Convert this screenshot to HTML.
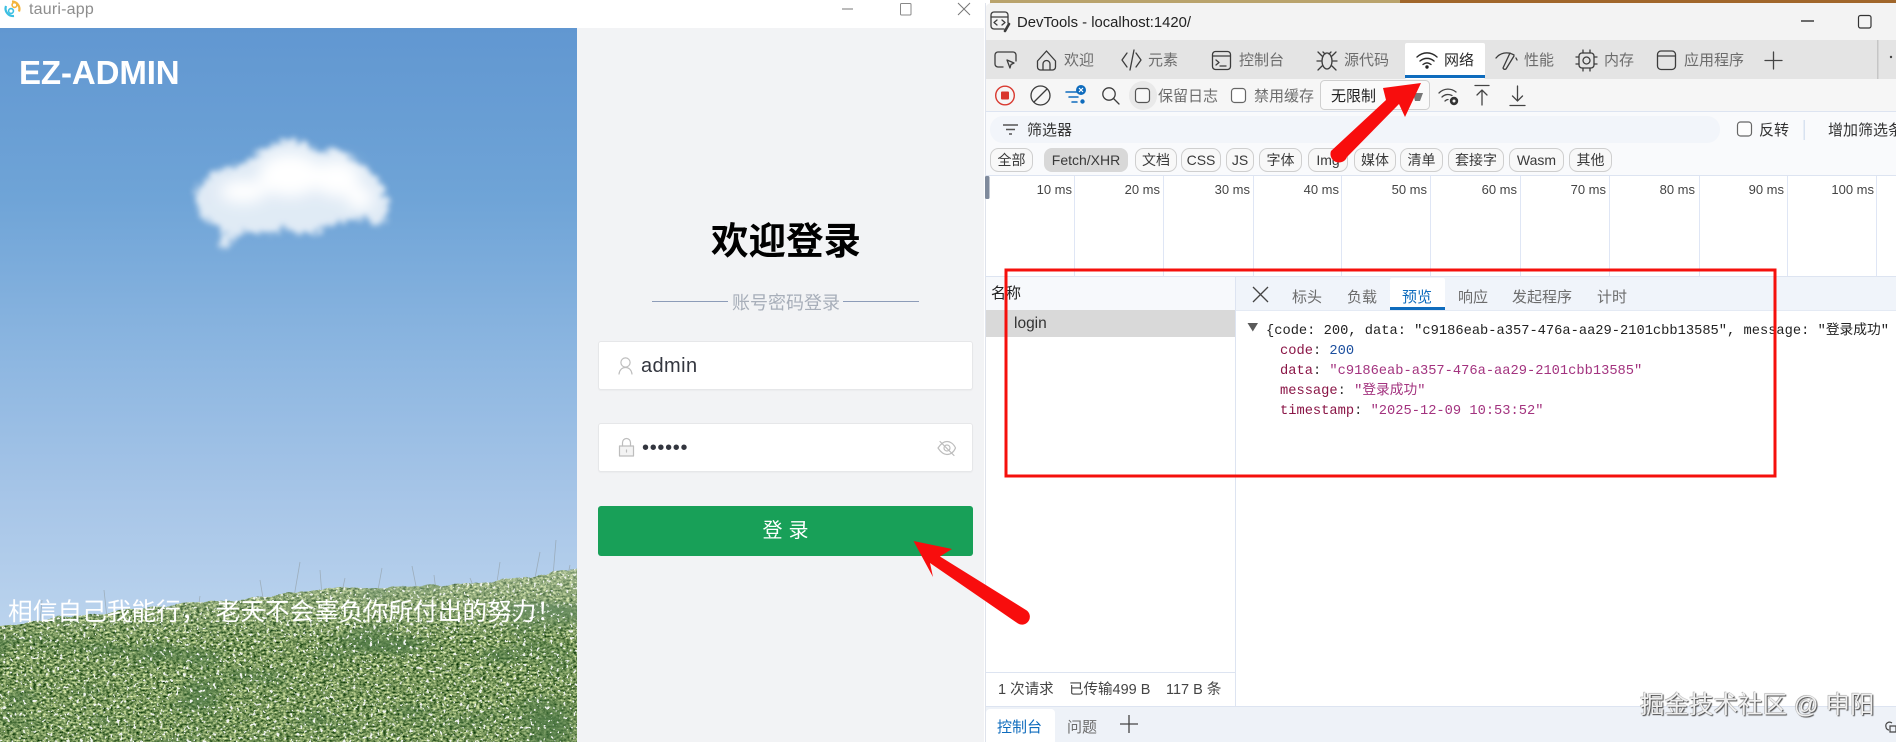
<!DOCTYPE html>
<html lang="zh">
<head>
<meta charset="utf-8">
<title>tauri-app DevTools</title>
<style>
html,body{margin:0;padding:0;width:1896px;height:742px;overflow:hidden;background:#fff}
body{position:relative;font-family:"Liberation Sans","Noto Sans CJK SC",sans-serif}
.a{position:absolute;white-space:nowrap}
.input{position:absolute;left:598px;width:373px;background:#fff;border:1px solid #e6e7e9;border-radius:3px;box-shadow:0 1px 1px rgba(0,0,0,.03)}
svg{position:absolute;left:0;top:0}
svg text{font-family:"Liberation Sans","Noto Sans CJK SC",sans-serif;font-size:15px;fill:#6c6c6c}
.ic{fill:none;stroke:#3c3c3c;stroke-width:1.3;stroke-linecap:round;stroke-linejoin:round}
.chip{fill:#f8f8f8;stroke:#cfcfcf;stroke-width:1}
.chips text{font-size:14px;fill:#3a3a3a;text-anchor:middle}
.ms text{font-size:13px;fill:#444;text-anchor:end}
.mono text{font-family:"Liberation Mono","Noto Sans CJK SC",monospace;font-size:13.73px}
</style>
</head>
<body>

<!-- Left app window -->
<div class="a" style="left:0;top:0;width:985px;height:28px;background:#fff"></div>
<div class="a" style="left:29px;top:0;font-size:16px;line-height:20px;color:#8d8d8d;letter-spacing:.2px">tauri-app</div>

<svg width="577" height="742" viewBox="0 0 577 742" style="left:0;top:0">
  <defs>
    <linearGradient id="sky" x1="0" y1="28" x2="0" y2="640" gradientUnits="userSpaceOnUse">
      <stop offset="0" stop-color="#6197d1"/>
      <stop offset=".28" stop-color="#6fa4d7"/>
      <stop offset=".55" stop-color="#8eb7e1"/>
      <stop offset=".78" stop-color="#a8c6e8"/>
      <stop offset="1" stop-color="#bdd5ee"/>
    </linearGradient>
    <linearGradient id="haze" x1="0" y1="570" x2="0" y2="640" gradientUnits="userSpaceOnUse">
      <stop offset="0" stop-color="#dfe6d8" stop-opacity=".38"/>
      <stop offset="1" stop-color="#dfe6d8" stop-opacity="0"/>
    </linearGradient>
    <filter id="clO" filterUnits="userSpaceOnUse" x="-60" y="-20" width="800" height="500" color-interpolation-filters="sRGB">
      <feTurbulence type="fractalNoise" baseFrequency=".06" numOctaves="5" seed="11" result="t"/>
      <feDisplacementMap in="SourceGraphic" in2="t" scale="55" xChannelSelector="R" yChannelSelector="G"/>
      <feGaussianBlur stdDeviation="9"/>
    </filter>
    <filter id="clI" filterUnits="userSpaceOnUse" x="-60" y="-20" width="800" height="500">
      <feGaussianBlur stdDeviation="22"/>
    </filter>
    <filter id="grass" filterUnits="userSpaceOnUse" x="0" y="540" width="577" height="202" color-interpolation-filters="sRGB">
      <feTurbulence type="fractalNoise" baseFrequency=".04" numOctaves="3" seed="3" result="e"/>
      <feDisplacementMap in="SourceGraphic" in2="e" scale="8" xChannelSelector="R" yChannelSelector="G" result="shape"/>
      <feTurbulence type="fractalNoise" baseFrequency=".3 .5" numOctaves="3" seed="4" result="n"/>
      <feColorMatrix in="n" type="matrix" values="1.4 0 0 0 -.24  1.2 0 0 0 -.02  1.1 0 0 0 -.2  0 0 0 0 1" result="base"/>
      <feTurbulence type="fractalNoise" baseFrequency=".012 .03" numOctaves="2" seed="12" result="lo"/>
      <feColorMatrix in="lo" type="matrix" values="0 0 0 0 .3  0 0 0 0 .47  0 0 0 0 .27  3 0 0 0 -1.6" result="dark"/>
      <feTurbulence type="fractalNoise" baseFrequency=".3" numOctaves="2" seed="21" result="s"/>
      <feColorMatrix in="s" type="matrix" values="0 0 0 0 .95  0 0 0 0 .96  0 0 0 0 .95  16 0 0 0 -10.2" result="white"/>
      <feMerge result="m"><feMergeNode in="base"/><feMergeNode in="dark"/><feMergeNode in="white"/></feMerge>
      <feComposite in="m" in2="shape" operator="in"/>
    </filter>
    <filter id="hz" filterUnits="userSpaceOnUse" x="0" y="540" width="577" height="202">
      <feTurbulence type="fractalNoise" baseFrequency=".04" numOctaves="3" seed="3" result="e"/>
      <feDisplacementMap in="SourceGraphic" in2="e" scale="8" xChannelSelector="R" yChannelSelector="G"/>
    </filter>
  </defs>
  <rect x="0" y="28" width="577" height="714" fill="url(#sky)"/>
  <!-- cloud -->
  <g transform="translate(180 120) scale(.3333)">
    <path filter="url(#clO)" fill="#e6eef7" fill-opacity=".95" d="M45 235 C55 180 85 150 200 130 C225 95 290 60 350 62 C395 65 405 95 420 100 C450 80 495 80 525 130 C570 150 610 165 625 260 C620 300 600 330 585 315 C570 295 550 290 500 300 C450 315 400 345 365 345 C335 335 330 320 310 325 C280 345 240 350 200 335 C170 340 150 370 120 385 C125 350 135 330 115 315 C80 310 50 285 45 235Z"/>
    <g filter="url(#clI)" fill="#fff">
      <ellipse cx="330" cy="165" rx="95" ry="65"/>
      <ellipse cx="470" cy="175" rx="70" ry="55"/>
      <ellipse cx="190" cy="215" rx="70" ry="35"/>
      <ellipse cx="540" cy="235" rx="40" ry="35"/>
    </g>
  </g>
  <!-- stems -->
  <g stroke="#8a9395" stroke-width=".8" fill="none" opacity=".55">
    <path d="M42 600l-2 22M104 590l3 28M200 596l-2 14M300 562l-6 35M320 570l2 26M382 568l-4 22M412 566l4 20M434 575l2 16M500 562l-3 20M540 552l-5 26M556 540l-3 36M570 565l-2 10M260 580l3 18M345 578l-3 14M470 578l4 10"/>
  </g>
  <path filter="url(#grass)" fill="#000" d="M0 626 C70 618 130 610 200 603 C260 597 300 592 340 589 C420 584 500 585 577 568 L590 568 L590 760 L-10 760 L-10 626Z"/>
  <path filter="url(#hz)" fill="url(#haze)" d="M0 626 C70 618 130 610 200 603 C260 597 300 592 340 589 C420 584 500 585 577 568 L590 568 L590 660 L-10 660 L-10 626Z"/>
  <rect x="577" y="28" width="20" height="714" fill="#f2f3f5"/>
</svg>

<svg width="40" height="28" viewBox="0 0 40 28" style="left:0;top:0">
  <path d="M12 1.500a7.500 7.500 0 0 1 7 10" fill="none" stroke="#f3b53c" stroke-width="2.200"/>
  <circle cx="14.500" cy="5" r="2.400" fill="none" stroke="#f3b53c" stroke-width="1.600"/>
  <path d="M14 16a7.500 7.500 0 0 1-8-10" fill="none" stroke="#3bbfe2" stroke-width="2.200"/>
  <circle cx="11" cy="11" r="2.400" fill="none" stroke="#3bbfe2" stroke-width="1.600"/>
</svg>

<div class="a" style="left:19px;top:53px;font-size:33px;line-height:39px;font-weight:700;color:#fff;letter-spacing:-.1px">EZ-ADMIN</div>
<div class="a" style="left:8px;top:595px;font-size:24.700px;line-height:36px;color:#fff">相信自己我能行，<span style="margin-left:10px">老天不会辜负你所付出的努力！</span></div>

<!-- Login panel -->
<div class="a" style="left:577px;top:28px;width:407px;height:714px;background:#f2f3f5"></div>
<div class="a" style="left:577px;top:216px;width:418px;text-align:center;font-size:37.500px;line-height:50px;font-weight:700;color:#000">欢迎登录</div>
<div class="a" style="left:652px;top:301px;width:76px;height:1px;background:#8d9cb8"></div>
<div class="a" style="left:843px;top:301px;width:76px;height:1px;background:#8d9cb8"></div>
<div class="a" style="left:732px;top:290px;font-size:18px;line-height:26px;color:#a7aeb9">账号密码登录</div>
<div class="input" style="top:341px;height:47px"></div>
<div class="input" style="top:423px;height:47px"></div>
<div class="a" style="left:641px;top:352px;font-size:20px;line-height:28px;color:#33363f;letter-spacing:.4px">admin</div>
<div class="a" style="left:642px;top:434px;font-size:20px;line-height:28px;color:#33363f;letter-spacing:.7px">••••••</div>
<div class="a" style="left:598px;top:506px;width:375px;height:50px;line-height:50px;background:#18a058;border-radius:3px;color:#fff;font-size:20px;text-align:center;letter-spacing:6px;text-indent:6px">登录</div>

<svg width="400" height="145" viewBox="590 335 400 145" style="left:590px;top:335px">
  <g fill="none" stroke="#bdbdbd" stroke-width="1.200" stroke-linecap="round" stroke-linejoin="round">
    <circle cx="625.500" cy="362.500" r="4.600"/>
    <path d="M619 374c.5-4 3-6.500 6.500-6.500s6 2.500 6.500 6.500"/>
    <rect x="619.500" y="446" width="14" height="10" fill="#f3f3f3"/>
    <path d="M622.500 446v-3.500a4 4 0 0 1 8 0v3.500M626.500 450v2"/>
    <path d="M938 448c3-4.500 6-6.500 9-6.500s6.500 2 8.500 6.500c-2 4.500-5 6.500-8.500 6.500s-6-2-9-6.500z"/>
    <circle cx="947" cy="448" r="3"/>
    <path d="M940 441.500l14 14"/>
  </g>
</svg>

<!-- DevTools window -->
<svg width="911" height="742" viewBox="985 0 911 742" style="left:985px;top:0">
  <!-- wallpaper strip -->
  <rect x="990" y="0" width="906" height="5" fill="#b9a36c"/>
  <rect x="1400" y="0" width="496" height="4" fill="#a0662a"/>
  <!-- frame -->
  <rect x="985" y="3" width="911" height="739" rx="7" fill="#fff"/>
  <path d="M985 40V10a7 7 0 0 1 7-7H1896V40Z" fill="#f3f3f3"/>
  <rect x="985" y="40" width="911" height="39" fill="#e4e4e4"/>
  <rect x="985" y="79" width="911" height="32" fill="#f6f6f6"/>
  <rect x="985" y="111" width="911" height="65" fill="#f9fafc"/>
  <rect x="985" y="111" width="911" height="1" fill="#dde4f1"/>
  <rect x="990" y="116" width="730" height="27" rx="13" fill="#f2f5fa"/>
  <rect x="985" y="175" width="911" height="1" fill="#dde4f1"/>
  <rect x="985" y="3" width="1" height="739" fill="#dfe3ec"/>

  <!-- Title -->
  <g class="ic" stroke-width="1.200">
    <path d="M1004 29h-10a3 3 0 0 1-3-3V15a3 3 0 0 1 3-3h11a3 3 0 0 1 3 3v8"/>
    <path d="M991 17h17M997 20l-3 2.500 3 2.500M1002 20l3 2.500-3 2.500"/>
    <path d="M1009 24l-4 7" stroke-width="2.600"/>
  </g>
  <text x="1017" y="27" textLength="174" lengthAdjust="spacingAndGlyphs" style="fill:#222;font-size:15px">DevTools - localhost:1420/</text>
  <path d="M1801 21h13" stroke="#222" stroke-width="1.300"/>
  <rect x="1858.500" y="15.500" width="12.500" height="12.500" rx="2" fill="none" stroke="#333" stroke-width="1.200"/>

  <!-- Tabs -->
  <rect x="1405" y="43" width="80" height="36" fill="#fff" rx="2"/>
  <rect x="1405" y="75" width="80" height="3" fill="#0f6cbd"/>
  <g class="ic">
    <path d="M1003 67h-5a3 3 0 0 1-3-3v-9a3 3 0 0 1 3-3h15a3 3 0 0 1 3 3v6"/>
    <path d="M1007 60l7 3-3 1.500-1 3.500z"/>
    <path d="M1037.500 61l9-10 9 10v6a3 3 0 0 1-3 3h-12a3 3 0 0 1-3-3zM1043 70v-6a3.500 3.500 0 0 1 7 0v6"/>
    <path d="M1127 53l-5 7 5 7M1136 53l5 7-5 7M1134 50l-4 20"/>
    <rect x="1212.500" y="51.500" width="18" height="18" rx="3"/>
    <path d="M1213 56h17M1216 60l3 2.500-3 2.500M1220 66h6"/>
    <ellipse cx="1327" cy="61" rx="5" ry="8"/>
    <path d="M1322 56l-4-4M1332 56l4-4M1321 61h-4M1333 61h4M1322 66l-4 4M1332 66l4 4M1323 52l2 2M1331 52l-2 2"/>
    <path d="M1496 58c4-5 11-7 18-3M1517 60l-1-2M1510 53l-7 15a2 2 0 0 0 3 1l8-13"/>
    <rect x="1579" y="53" width="15" height="15" rx="3"/>
    <circle cx="1586.500" cy="60.500" r="3.500"/>
    <path d="M1583 50v3M1590 50v3M1583 68v3M1590 68v3M1576 57h3M1576 64h3M1594 57h3M1594 64h3"/>
    <rect x="1657.500" y="51" width="18" height="18.500" rx="3.500"/>
    <path d="M1658 56h17"/>
    <path d="M1765 60.500h17M1773.500 52v17" stroke="#444"/>
  </g>
  <g stroke="#2a2a2a" stroke-width="1.400" fill="none" stroke-linecap="round">
    <path d="M1417 57c6-5.500 14-5.500 20 0M1420 61c4-3.500 10-3.500 14 0M1423 64.500c2.500-2 5.500-2 8 0"/>
  </g>
  <circle cx="1427" cy="67" r="1.700" fill="#222"/>
  <text x="1064" y="65">欢迎</text>
  <text x="1148" y="65">元素</text>
  <text x="1239" y="65">控制台</text>
  <text x="1344" y="65">源代码</text>
  <text x="1444" y="65" style="fill:#2b2b2b">网络</text>
  <text x="1524" y="65">性能</text>
  <text x="1604" y="65">内存</text>
  <text x="1684" y="65">应用程序</text>
  <rect x="1877" y="40" width="1.500" height="39" fill="#c6c6c6"/>
  <circle cx="1891" cy="57" r="1.200" fill="#444"/>

  <!-- Toolbar -->
  <circle cx="1005" cy="95.500" r="9.300" fill="none" stroke="#d93a30" stroke-width="1.400"/>
  <rect x="1001" y="91.500" width="8" height="8" rx="1" fill="#d9362c"/>
  <g class="ic" stroke="#555">
    <circle cx="1040.500" cy="95.500" r="9.500"/>
    <path d="M1034 102l13-13"/>
    <circle cx="1109" cy="94" r="6.200"/>
    <path d="M1113.500 98.500l5.500 5.500"/>
  </g>
  <g stroke="#0f6cbd" stroke-width="1.500" stroke-linecap="round" fill="none">
    <path d="M1066 92h13M1069 97h9M1072 102h5"/>
  </g>
  <circle cx="1081" cy="90" r="5" fill="#0f6cbd"/>
  <path d="M1079 88l4 4M1083 88l-4 4" stroke="#fff" stroke-width="1.200"/>
  <circle cx="1082.500" cy="101.500" r="2.200" fill="#0f6cbd"/>
  <rect x="1129" y="81" width="28" height="29" rx="14" fill="#e9e9e9"/>
  <rect x="1135.500" y="88.500" width="14" height="14" rx="3" fill="#f8f8f8" stroke="#555" stroke-width="1.200"/>
  <text x="1158" y="101">保留日志</text>
  <rect x="1231.500" y="88.500" width="14" height="14" rx="3" fill="#fff" stroke="#666" stroke-width="1.200"/>
  <text x="1254" y="101">禁用缓存</text>
  <rect x="1320.500" y="80.500" width="109" height="29" rx="4" fill="#fafafa" stroke="#cfcfcf"/>
  <text x="1331" y="101" style="fill:#222">无限制</text>
  <path d="M1413 93h10l-3 8h-5z" fill="#777"/>
  <g fill="none" stroke="#444" stroke-width="1.300" stroke-linecap="round">
    <path d="M1439 93c5-5 12-5 17-1M1442 97c3-3 7-3 10-1.500M1445 101c1-1 2-1.500 3-1.500"/>
    <path d="M1475 85.500h14M1482 105V90M1477 95l5-5 5 5"/>
    <path d="M1510 105.500h15M1517.500 86v15M1512.500 96l5 5 5-5"/>
  </g>
  <circle cx="1454" cy="101" r="4.200" fill="#333"/>
  <circle cx="1454" cy="101" r="1.500" fill="#f6f6f6"/>

  <!-- Filter row -->
  <path d="M1003 125h15M1006 129.500h9M1009 134h3" stroke="#555" stroke-width="1.500" fill="none"/>
  <text x="1027" y="135" style="fill:#333">筛选器</text>
  <rect x="1737.500" y="122" width="14" height="14" rx="3" fill="#fdfdfd" stroke="#666" stroke-width="1.200"/>
  <text x="1759" y="135" style="fill:#333">反转</text>
  <rect x="1803.500" y="120" width="1.500" height="20" fill="#d8e2f0"/>
  <text x="1828" y="135" style="fill:#333">增加筛选条件</text>

  <!-- Chips -->
  <g class="chips">
    <rect class="chip" x="990.500" y="148.500" width="42" height="23" rx="8"/>
    <rect x="1044" y="148" width="84" height="24" rx="8" fill="#d8d8d8"/>
    <rect class="chip" x="1135.500" y="148.500" width="41" height="23" rx="8"/>
    <rect class="chip" x="1181.500" y="148.500" width="39" height="23" rx="8"/>
    <rect class="chip" x="1226.500" y="148.500" width="27" height="23" rx="8"/>
    <rect class="chip" x="1259.500" y="148.500" width="42" height="23" rx="8"/>
    <rect class="chip" x="1308.500" y="148.500" width="39" height="23" rx="8"/>
    <rect class="chip" x="1354.500" y="148.500" width="41" height="23" rx="8"/>
    <rect class="chip" x="1400.500" y="148.500" width="42" height="23" rx="8"/>
    <rect class="chip" x="1448.500" y="148.500" width="55" height="23" rx="8"/>
    <rect class="chip" x="1509.500" y="148.500" width="54" height="23" rx="8"/>
    <rect class="chip" x="1569.500" y="148.500" width="42" height="23" rx="8"/>
    <text x="1011.500" y="165">全部</text>
    <text x="1086" y="165">Fetch/XHR</text>
    <text x="1156" y="165">文档</text>
    <text x="1201" y="165">CSS</text>
    <text x="1240" y="165">JS</text>
    <text x="1280.500" y="165">字体</text>
    <text x="1328" y="165">Img</text>
    <text x="1375" y="165">媒体</text>
    <text x="1421.500" y="165">清单</text>
    <text x="1476" y="165">套接字</text>
    <text x="1536.500" y="165">Wasm</text>
    <text x="1590.500" y="165">其他</text>
  </g>

  <!-- Timeline -->
  <rect x="985" y="176" width="4.500" height="23" rx="1.500" fill="#7f8a9c"/>
  <g stroke="#dfe6f5" stroke-width="1">
    <path d="M1074.500 176v100M1163.500 176v100M1253.500 176v100M1341.500 176v100M1430.500 176v100M1520.500 176v100M1609.500 176v100M1699.500 176v100M1787.500 176v100M1876.500 176v100"/>
  </g>
  <g class="ms">
    <text x="1072" y="194">10 ms</text>
    <text x="1160" y="194">20 ms</text>
    <text x="1250" y="194">30 ms</text>
    <text x="1339" y="194">40 ms</text>
    <text x="1427" y="194">50 ms</text>
    <text x="1517" y="194">60 ms</text>
    <text x="1606" y="194">70 ms</text>
    <text x="1695" y="194">80 ms</text>
    <text x="1784" y="194">90 ms</text>
    <text x="1874" y="194">100 ms</text>
  </g>

  <!-- Requests panel -->
  <rect x="985" y="276" width="911" height="1" fill="#dde4f1"/>
  <rect x="986" y="277" width="249" height="33" fill="#f7f9fc"/>
  <rect x="1235" y="277" width="661" height="33" fill="#f0f4fa"/>
  <rect x="1235" y="310" width="661" height="1" fill="#e4eaf4"/>
  <rect x="986" y="310" width="249" height="27" fill="#d9d9d9"/>
  <rect x="1235" y="277" width="1" height="429" fill="#dde4f1"/>
  <text x="991" y="298" style="fill:#222">名称</text>
  <text x="1014" y="328" style="fill:#333;font-size:15.500px">login</text>
  <path d="M1253 287l15 15M1268 287l-15 15" stroke="#444" stroke-width="1.300"/>
  <rect x="1390" y="278" width="55" height="32" fill="#fff" rx="2"/>
  <rect x="1390" y="307" width="55" height="3" fill="#0f6cbd"/>
  <text x="1292" y="302">标头</text>
  <text x="1347" y="302">负载</text>
  <text x="1402" y="302" style="fill:#0f6cbd">预览</text>
  <text x="1458" y="302">响应</text>
  <text x="1512" y="302">发起程序</text>
  <text x="1597" y="302">计时</text>

  <!-- Preview -->
  <path d="M1247.500 323h10.500l-5.200 8.500z" fill="#5a5a5a"/>
  <g class="mono">
    <text x="1266" y="334" style="fill:#222">{code: 200, data: "c9186eab-a357-476a-aa29-2101cbb13585", message: "登录成功"</text>
    <text x="1280" y="354"><tspan fill="#8a1546">code</tspan><tspan fill="#333">: </tspan><tspan fill="#1c4f9e">200</tspan></text>
    <text x="1280" y="374"><tspan fill="#8a1546">data</tspan><tspan fill="#333">: </tspan><tspan fill="#a3337f">"c9186eab-a357-476a-aa29-2101cbb13585"</tspan></text>
    <text x="1280" y="394"><tspan fill="#8a1546">message</tspan><tspan fill="#333">: </tspan><tspan fill="#a3337f">"登录成功"</tspan></text>
    <text x="1280" y="414"><tspan fill="#8a1546">timestamp</tspan><tspan fill="#333">: </tspan><tspan fill="#a3337f">"2025-12-09 10:53:52"</tspan></text>
  </g>

  <!-- Status -->
  <rect x="986" y="672" width="249" height="1" fill="#dde4f1"/>
  <g>
    <text x="998" y="694" style="fill:#444;font-size:14.500px">1 次请求</text>
    <text x="1069" y="694" style="fill:#444;font-size:14.500px">已传输499 B</text>
    <text x="1166" y="694" style="fill:#444;font-size:14.500px">117 B 条</text>
  </g>

  <!-- Drawer -->
  <rect x="986" y="706" width="910" height="36" fill="#eef2f8"/>
  <rect x="986" y="706" width="910" height="1" fill="#dde4f1"/>
  <path d="M986 742V713a4 4 0 0 1 4-4h61a4 4 0 0 1 4 4v29Z" fill="#fff"/>
  <text x="997" y="732" style="fill:#0f6cbd">控制台</text>
  <text x="1067" y="732">问题</text>
  <path d="M1120 724h18M1129 715v18" stroke="#444" stroke-width="1.300"/>
  <path d="M1892 723c-3-2-7 0-6 4 0 2 2 3 3 3M1890 726h6v6h-6z" fill="none" stroke="#444" stroke-width="1.200"/>

  <!-- Red box -->
  <rect x="1006" y="270" width="769" height="206" fill="none" stroke="#f5100c" stroke-width="3"/>
</svg>

<div class="a" style="left:1640px;top:688px;font-size:24.500px;line-height:36px;color:#f0f0f0;text-shadow:1px 1px 1px #444,-.5px -.5px .5px #999">掘金技术社区 @ 申阳</div>

<!-- Red arrows -->
<svg width="1896" height="742" viewBox="0 0 1896 742" style="left:0;top:0">
  <path fill="#f80d0d" d="M913.500 541L952 549L940 556.500L1026 610a7.500 7.500 0 0 1-8 13.500L930 563L933 577Z"/>
  <path fill="#f80d0d" d="M1421 83L1405 117L1399 104L1347 157a7.500 7.500 0 0 1-16-6L1386 100L1383 88Z"/>
  <!-- window controls of left app -->
  <path d="M842 9h11" stroke="#777" stroke-width="1"/>
  <rect x="900.500" y="3.500" width="10.500" height="11.500" fill="none" stroke="#888" rx="1"/>
  <path d="M958 3l12 12M970 3l-12 12" stroke="#777" stroke-width="1"/>
</svg>
</body>
</html>
